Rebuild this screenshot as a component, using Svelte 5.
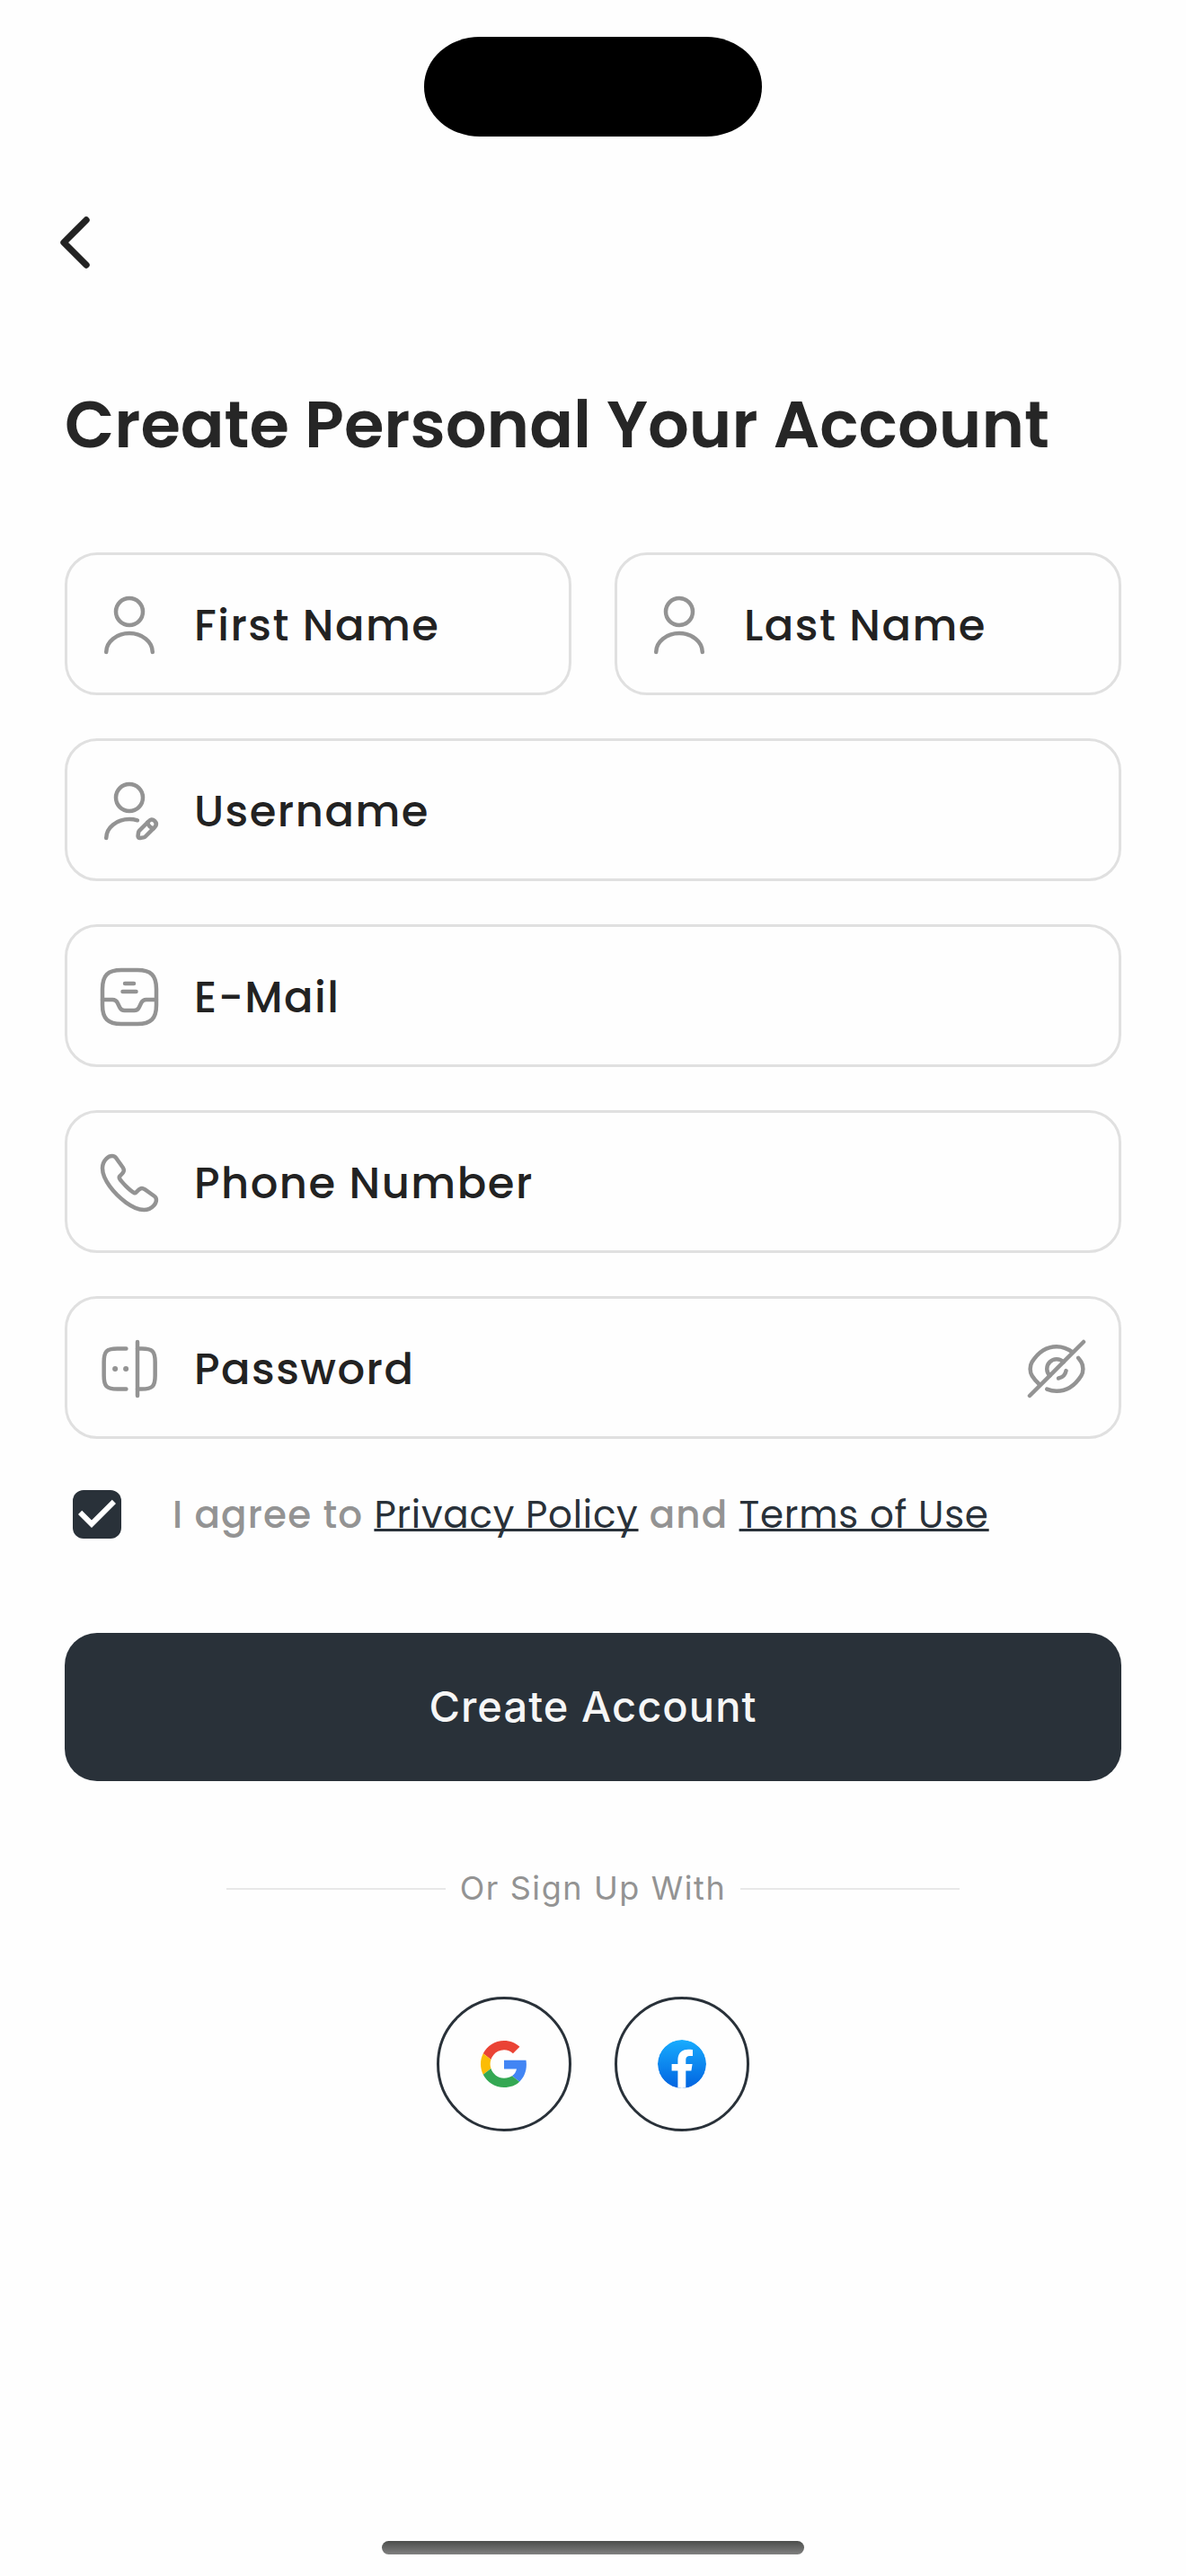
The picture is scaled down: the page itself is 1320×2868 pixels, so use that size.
<script>
  const user = [
    'M12 12c2.76 0 5-2.24 5-5s-2.24-5-5-5-5 2.24-5 5 2.24 5 5 5z',
    'M20.59 22c0-3.87-3.85-7-8.59-7s-8.59 3.13-8.59 7'
  ];
  const userEdit = [
    'M12 12c2.76 0 5-2.24 5-5s-2.24-5-5-5-5 2.24-5 5 2.24 5 5 5z',
    'M19.21 15.74l-3.54 3.54c-.14.14-.27.4-.3.59l-.19 1.35c-.07.49.27.83.76.76l1.35-.19c.19-.03.46-.16.59-.3l3.54-3.54c.61-.61.9-1.32 0-2.22-.89-.89-1.6-.6-2.21.01z',
    'M18.7 16.25c.3 1.08 1.14 1.92 2.22 2.22',
    'M3.41 22c0-3.87 3.85-7 8.59-7 1.04 0 2.04.15 2.97.43'
  ];
  const inbox = [
    'M9 22h6c5 0 7-2 7-7V9c0-5-2-7-7-7H9C4 2 2 4 2 9v6c0 5 2 7 7 7z',
    'M2 13h3.76c.76 0 1.45.43 1.79 1.11l.89 1.79c.56 1.1 1.56 1.1 1.8 1.1h3.53c.76 0 1.45-.43 1.79-1.11l.89-1.79A2 2 0 0118.24 13h3.74',
    'M10.34 7h3.33M9.5 10h5'
  ];
  const call = [
    'M21.97 18.33c0 .36-.08.73-.25 1.09-.17.36-.39.7-.68 1.02-.49.54-1.03.93-1.64 1.18-.6.25-1.25.38-1.95.38-1.02 0-2.11-.24-3.26-.73s-2.3-1.15-3.44-1.98a28.75 28.75 0 01-3.28-2.8 28.414 28.414 0 01-2.79-3.27c-.82-1.14-1.48-2.28-1.96-3.41C2.24 8.67 2 7.58 2 6.54c0-.68.12-1.33.36-1.93.24-.61.62-1.17 1.15-1.67C4.15 2.31 4.85 2 5.59 2c.28 0 .56.06.81.18.26.12.49.3.67.56l2.32 3.27c.18.25.31.48.4.7.09.21.14.42.14.61 0 .24-.07.48-.21.71-.13.23-.32.47-.56.71l-.76.79c-.11.11-.16.24-.16.4 0 .08.01.15.03.23.03.08.06.14.08.2.18.33.49.76.93 1.28.45.52.93 1.05 1.45 1.58.54.53 1.06 1.02 1.59 1.47.52.44.95.74 1.29.92.05.02.11.05.18.08.08.03.16.04.25.04.17 0 .3-.06.41-.17l.76-.75c.25-.25.49-.44.72-.56.23-.14.46-.21.71-.21.19 0 .39.04.61.13.22.09.45.22.7.39l3.31 2.35c.26.18.44.39.55.64.1.25.16.5.16.78z'
  ];
  const password = [
    'M10.8 19.5H7.5c-4 0-4.95-1-4.95-5v-5c0-4 .95-5 4.95-5h3.3',
    'M15 4.5h1.6c4 0 4.95 1 4.95 5v5c0 4-.95 5-4.95 5H15',
    'M15 2v20'
  ];
  const eyeOff = [
    'M14.53 9.47l-5.06 5.06a3.576 3.576 0 115.06-5.06z',
    'M17.82 5.77C16.07 4.45 14.07 3.73 12 3.73c-3.53 0-6.82 2.08-9.11 5.68-.9 1.41-.9 3.78 0 5.19.79 1.24 1.71 2.31 2.71 3.17M8.42 19.53c1.14.48 2.35.74 3.58.74 3.53 0 6.82-2.08 9.11-5.68.9-1.41.9-3.78 0-5.19-.33-.52-.69-1.01-1.06-1.47',
    'M15.51 12.7a3.565 3.565 0 01-2.82 2.82M9.47 14.53L2 22M22 2l-7.47 7.47'
  ];

  const fields = [
    { label: 'First Name', icon: user, half: true },
    { label: 'Last Name', icon: user, half: true },
    { label: 'Username', icon: userEdit },
    { label: 'E-Mail', icon: inbox },
    { label: 'Phone Number', icon: call },
    { label: 'Password', icon: password, dots: true, secret: true }
  ];
</script>

{#snippet icon(paths, dots)}
  <svg class="icon" viewBox="0 0 24 24" aria-hidden="true">
    {#each paths as d}<path {d} />{/each}
    {#if dots}
      <circle class="dot" cx="6.7" cy="12" r="1" />
      <circle class="dot" cx="10.7" cy="12" r="1" />
    {/if}
  </svg>
{/snippet}

<main class="screen">
  <div class="island"></div>

  <button class="back" aria-label="Back">
    <svg viewBox="0 0 36 60"><path d="M30 5 5 30l25 25" /></svg>
  </button>

  <h1>Create Personal Your Account</h1>

  <form class="fields">
    {#each fields as f}
      <div class="field" class:half={f.half}>
        {@render icon(f.icon, f.dots)}
        <span class="label">{f.label}</span>
        {#if f.secret}{@render icon(eyeOff, false)}{/if}
      </div>
    {/each}
  </form>

  <div class="agree">
    <svg class="check" viewBox="0 0 24 24" aria-hidden="true">
      <rect x="3" y="3" width="18" height="18" rx="4" />
      <path d="M10 17l-5-5 1.41-1.41L10 14.17l7.59-7.58L19 8z" />
    </svg>
    <p>I agree to <a href="#privacy">Privacy Policy</a> and <a href="#terms">Terms of Use</a></p>
  </div>

  <button class="submit">Create Account</button>

  <div class="divider"><i></i><span>Or Sign Up With</span><i></i></div>

  <div class="social">
    <button aria-label="Google">
      <svg class="google" viewBox="0 0 48 48">
        <path fill="#EA4335" d="M24 9.5c3.54 0 6.71 1.22 9.21 3.6l6.85-6.85C35.9 2.38 30.47 0 24 0 14.62 0 6.51 5.38 2.56 13.22l7.98 6.19C12.43 13.72 17.74 9.5 24 9.5z" />
        <path fill="#4285F4" d="M46.98 24.55c0-1.57-.15-3.09-.38-4.55H24v9.02h12.94c-.58 2.96-2.26 5.48-4.78 7.18l7.73 6c4.51-4.18 7.09-10.36 7.09-17.65z" />
        <path fill="#FBBC05" d="M10.53 28.59c-.48-1.45-.76-2.99-.76-4.59s.27-3.14.76-4.59l-7.98-6.19C.92 16.46 0 20.12 0 24c0 3.88.92 7.54 2.56 10.78l7.97-6.19z" />
        <path fill="#34A853" d="M24 48c6.48 0 11.93-2.13 15.89-5.81l-7.73-6c-2.15 1.45-4.92 2.3-8.16 2.3-6.26 0-11.57-4.22-13.47-9.91l-7.98 6.19C6.51 42.62 14.62 48 24 48z" />
      </svg>
    </button>
    <button aria-label="Facebook">
      <svg class="facebook" viewBox="0 0 54 54">
        <defs>
          <linearGradient id="fb" x1="0" y1="0" x2="0" y2="1">
            <stop offset="0" stop-color="#18ACFE" />
            <stop offset="1" stop-color="#0163E0" />
          </linearGradient>
        </defs>
        <circle cx="27" cy="27" r="27" fill="url(#fb)" />
        <path fill="#fff" d="M37.4 34.6l1.2-7.5h-7.3v-4.4c0-2.8 1-4.7 5.1-4.7H39v-6.9c-1.1-.2-3.2-.4-5.1-.4-6.9 0-11.5 4.2-11.5 11.6v4.8h-6.8v7.5h6.8v19c1.5.3 3 .4 4.5.4s3-.1 4.4-.4v-19h6.1z" />
      </svg>
    </button>
  </div>

  <div class="home"></div>
</main>

<style>
  :global(body) {
    margin: 0;
    background: #fefefe;
  }

  .screen {
    box-sizing: border-box;
    display: flex;
    flex-direction: column;
    width: 1320px;
    height: 2868px;
    padding: 41px 72px 24px;
    background: #fefefe;
    color: #222;
    font-family: Poppins, Inter, 'Noto Sans', sans-serif;
  }

  button {
    display: flex;
    align-items: center;
    justify-content: center;
    padding: 0;
    border: 0;
    background: none;
    font: inherit;
  }

  .island {
    align-self: center;
    width: 376px;
    height: 111px;
    border-radius: 62px / 55px;
    background: #000;
  }

  .back {
    align-self: flex-start;
    width: 36px;
    height: 60px;
    margin: 88px 0 0 -6px;
  }

  .back svg {
    width: 36px;
    height: 60px;
    fill: none;
    stroke: #222;
    stroke-width: 7.4;
    stroke-linecap: round;
    stroke-linejoin: round;
  }

  h1 {
    height: 100px;
    margin: 123px 0 0;
    color: #262626;
    font-size: 72px;
    font-weight: 600;
    line-height: 100px;
    white-space: nowrap;
  }

  .fields {
    display: grid;
    grid-template-columns: 1fr 1fr;
    gap: 48px;
    margin-top: 92px;
  }

  .field {
    box-sizing: border-box;
    display: flex;
    grid-column: span 2;
    align-items: center;
    height: 159px;
    padding: 3px 33px 0;
    border: 3px solid #e0e0e0;
    border-radius: 36px;
  }

  .field.half {
    grid-column: span 1;
  }

  .icon {
    flex: none;
    width: 72px;
    height: 72px;
    fill: none;
    stroke: #939393;
    stroke-width: 1.5;
    stroke-linecap: round;
    stroke-linejoin: round;
  }

  .dot {
    fill: #939393;
    stroke: none;
  }

  .label {
    flex: 1;
    margin-left: 36px;
    padding-top: 2px;
    font-size: 48px;
    font-weight: 500;
    line-height: 60px;
    letter-spacing: 1.5px;
    white-space: nowrap;
  }

  .agree {
    display: flex;
    align-items: center;
    height: 72px;
    margin-top: 48px;
  }

  .check {
    flex: none;
    width: 72px;
    height: 72px;
    fill: #fff;
  }

  .check rect {
    fill: #293139;
  }

  .agree p {
    margin: 0 0 0 48px;
    padding-top: 2px;
    color: #939393;
    font-size: 42px;
    font-weight: 500;
    line-height: 60px;
    letter-spacing: 1.2px;
    white-space: nowrap;
  }

  .agree a {
    color: #293139;
    font-weight: 400;
    letter-spacing: 0.75px;
    text-decoration: underline;
    text-decoration-thickness: 3px;
    text-decoration-skip-ink: none;
    text-underline-offset: 1px;
  }

  .submit {
    box-sizing: border-box;
    height: 165px;
    margin-top: 96px;
    padding-bottom: 2px;
    border-radius: 36px;
    background: #293139;
    color: #f6f6f6;
    font-family: Inter, sans-serif;
    font-size: 47px;
    font-weight: 500;
    letter-spacing: 1.05px;
  }

  .divider {
    display: flex;
    align-items: center;
    align-self: center;
    justify-content: space-between;
    width: 816px;
    height: 60px;
    margin-top: 90px;
    color: #939393;
    font-family: Inter, sans-serif;
    font-size: 36px;
    letter-spacing: 1.6px;
    white-space: nowrap;
  }

  .divider span {
    padding-bottom: 2px;
  }

  .divider i {
    width: 244px;
    height: 2px;
    background: #e8e8e8;
  }

  .social {
    display: flex;
    justify-content: center;
    gap: 48px;
    margin-top: 90px;
  }

  .social button {
    box-sizing: border-box;
    width: 150px;
    height: 150px;
    border: 3px solid #293139;
    border-radius: 50%;
  }

  .google {
    width: 52px;
    height: 52px;
  }

  .facebook {
    width: 54px;
    height: 54px;
    border-radius: 50%;
  }

  .home {
    align-self: center;
    width: 470px;
    height: 15px;
    margin-top: auto;
    border-radius: 8px;
    background: linear-gradient(#4c4e4c, #808080);
  }
</style>
